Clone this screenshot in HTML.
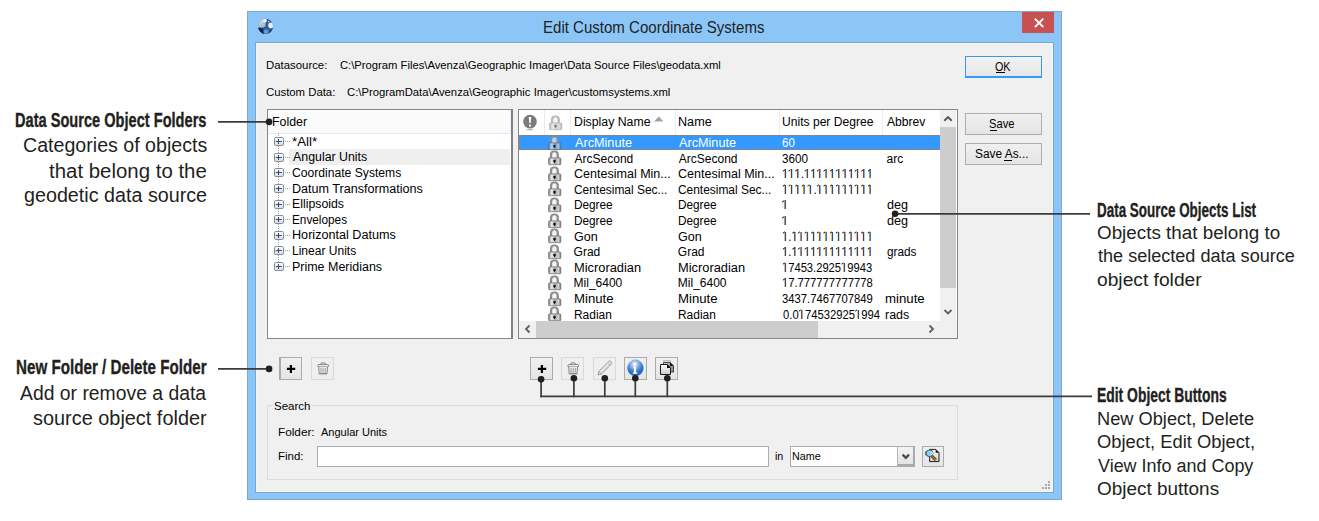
<!DOCTYPE html>
<html><head><meta charset="utf-8"><style>
html,body{margin:0;padding:0}
body{width:1319px;height:521px;background:#fff;position:relative;overflow:hidden;font-family:"Liberation Sans",sans-serif}
.a{position:absolute}
.t{position:absolute;white-space:pre;line-height:1;transform-origin:0 0;font-family:"Liberation Sans",sans-serif}
.o{position:relative;padding:0 1.9px 0 2.1px}.o::before{content:"";position:absolute;left:0.7px;top:2.6px;width:2.2px;height:1.1px;background:currentColor;transform:skewY(-38deg)}
</style></head><body>
<div class="a" style="left:247px;top:11px;width:815px;height:489px;background:#8cc6f7;box-sizing:border-box;border:1px solid #7ea6cf"></div>
<div class="a" style="left:255px;top:42px;width:799px;height:451px;background:#f0f0f0;box-sizing:border-box;border:1px solid #72a9dc"></div>
<div class="a" style="left:256px;top:43px;width:797px;height:1px;background:#f8f3ee"></div>
<div class="a" style="left:256px;top:43px;width:1px;height:449px;background:#f8f3ee"></div>
<div class="a" style="left:256px;top:491px;width:797px;height:1px;background:#f8f3ee"></div>
<div class="a" style="left:1052px;top:43px;width:1px;height:449px;background:#f8f3ee"></div>
<div class="t" style="left:542.89px;top:19.38px;font-size:16.5px;color:#222;font-weight:normal;transform:scaleX(0.9112);">Edit Custom Coordinate Systems</div>
<div class="a" style="left:1022px;top:12px;width:32px;height:21px;background:#c75050"></div>
<svg class="a" style="left:1022px;top:12px" width="32" height="21"><path d="M13.6 7.4 L20.6 14.4 M20.6 7.4 L13.6 14.4" stroke="#fff" stroke-width="1.9" stroke-linecap="square"/></svg>
<svg class="a" style="left:257px;top:18px" width="17" height="17" viewBox="0 0 17 17">
<defs><linearGradient id="gl" x1="0" y1="0" x2="0.3" y2="1"><stop offset="0" stop-color="#e9eff4"/><stop offset="1" stop-color="#9fb6ca"/></linearGradient>
<clipPath id="gc"><circle cx="8.6" cy="8.35" r="7.6"/></clipPath></defs>
<g clip-path="url(#gc)">
<rect x="0" y="0" width="17" height="17" fill="#2f5b9b"/>
<path d="M0 9.6 L0 0 L9.6 0 L9.4 3.6 L8.2 6 L8.8 8 L6.4 9.6 L3.8 9.8 Z" fill="url(#gl)"/>
<ellipse cx="8" cy="2.4" rx="1.7" ry="1.5" fill="#f2f5f8"/>
<path d="M10.8 3.2 Q12 2.6 12.6 3.6 L11.6 4.6 Z" fill="#dfe8f0"/>
<ellipse cx="13.8" cy="7.4" rx="2.6" ry="2.8" fill="#e6edf4"/>
<path d="M0 9.6 L3.8 9.8 L6.2 11.2 L7.4 17 L0 17 Z" fill="#0e2360"/>
<ellipse cx="9.2" cy="13.6" rx="2.7" ry="2.1" fill="#6b9bbd"/>
<path d="M12 12 L17 10 L17 17 L11 17 Z" fill="#244d8d"/>
</g>
</svg>
<div class="t" style="left:265.67px;top:59.95px;font-size:11px;color:#000;font-weight:normal;transform:scaleX(1.0345);">Datasource:</div>
<div class="t" style="left:339.98px;top:59.95px;font-size:11px;color:#000;font-weight:normal;transform:scaleX(1.0216);">C:\Program Files\Avenza\Geographic Imager\Data Source Files\geodata.xml</div>
<div class="t" style="left:265.67px;top:86.65px;font-size:11px;color:#000;font-weight:normal;transform:scaleX(1.0303);">Custom Data:</div>
<div class="t" style="left:346.97px;top:86.65px;font-size:11px;color:#000;font-weight:normal;transform:scaleX(1.0255);">C:\ProgramData\Avenza\Geographic Imager\customsystems.xml</div>
<div class="a" style="left:965px;top:56px;width:77px;height:22px;box-sizing:border-box;border:1px solid #3399ff;background:linear-gradient(#f2f2f2,#e6e6e6)"></div>
<div class="a" style="left:965px;top:76px;width:77px;height:2px;background:#3399ff"></div>
<div class="a" style="left:966px;top:57px;width:75px;height:1px;background:#fbf3ea"></div>
<div class="t" style="left:994.80px;top:60.70px;font-size:12px;color:#000;font-weight:normal;transform:scaleX(0.8941);">OK</div>
<div class="a" style="left:996px;top:72px;width:9px;height:1px;background:#000"></div>
<div class="a" style="left:965px;top:113px;width:77px;height:22px;box-sizing:border-box;border:1px solid #adadad;background:linear-gradient(#f0f0f0,#e5e5e5)"></div>
<div class="t" style="left:989.27px;top:117.90px;font-size:12px;color:#000;font-weight:normal;transform:scaleX(0.9308);">Save</div>
<div class="a" style="left:990px;top:130px;width:7px;height:1px;background:#000"></div>
<div class="a" style="left:965px;top:143px;width:77px;height:22px;box-sizing:border-box;border:1px solid #adadad;background:linear-gradient(#f0f0f0,#e5e5e5)"></div>
<div class="t" style="left:975.01px;top:148.40px;font-size:12px;color:#000;font-weight:normal;transform:scaleX(0.9904);">Save As...</div>
<div class="a" style="left:1004px;top:160px;width:8px;height:1px;background:#000"></div>
<div class="a" style="left:267px;top:109px;width:246px;height:230px;box-sizing:border-box;border:1px solid #828790;border-right:2px solid #7c818a;background:#fff"></div>
<div class="a" style="left:268px;top:110px;width:243px;height:23px;background:#fbfbfb"></div>
<div class="a" style="left:268px;top:133px;width:243px;height:1px;background:#e3ecf6"></div>
<div class="a" style="left:510px;top:110px;width:1px;height:24px;background:#e8eff8"></div>
<div class="t" style="left:271.97px;top:115.80px;font-size:12px;color:#000;font-weight:normal;transform:scaleX(1.0303);">Folder</div>
<div class="a" style="left:289px;top:149px;width:221px;height:16px;background:#efefef"></div>
<div class="t" style="left:291.50px;top:135.70px;font-size:12px;color:#000;font-weight:normal;transform:scaleX(1.1048);">*All*</div>
<svg class="a" style="left:274px;top:137px" width="10" height="9"><rect x="0.5" y="0.5" width="9" height="8" rx="1.3" fill="url(#pb)" stroke="#8c8c8c"/><path d="M1.7 4.5 H7.9 M4.5 1.9 V7.1" stroke="#2d4f8f" stroke-width="1.1"/></svg>
<div class="a" style="left:285px;top:141px;width:5px;height:1px;background:repeating-linear-gradient(90deg,#a0a0a0 0 1px,transparent 1px 2px)"></div>
<div class="a" style="left:278px;top:146px;width:1px;height:7px;background:repeating-linear-gradient(180deg,#a0a0a0 0 1px,transparent 1px 2px)"></div>
<div class="t" style="left:292.60px;top:151.30px;font-size:12px;color:#000;font-weight:normal;transform:scaleX(1.0306);">Angular Units</div>
<svg class="a" style="left:274px;top:153px" width="10" height="9"><rect x="0.5" y="0.5" width="9" height="8" rx="1.3" fill="url(#pb)" stroke="#8c8c8c"/><path d="M1.7 4.5 H7.9 M4.5 1.9 V7.1" stroke="#2d4f8f" stroke-width="1.1"/></svg>
<div class="a" style="left:285px;top:157px;width:5px;height:1px;background:repeating-linear-gradient(90deg,#a0a0a0 0 1px,transparent 1px 2px)"></div>
<div class="a" style="left:278px;top:162px;width:1px;height:6px;background:repeating-linear-gradient(180deg,#a0a0a0 0 1px,transparent 1px 2px)"></div>
<div class="t" style="left:291.59px;top:166.90px;font-size:12px;color:#000;font-weight:normal;transform:scaleX(1.0112);">Coordinate Systems</div>
<svg class="a" style="left:274px;top:168px" width="10" height="9"><rect x="0.5" y="0.5" width="9" height="8" rx="1.3" fill="url(#pb)" stroke="#8c8c8c"/><path d="M1.7 4.5 H7.9 M4.5 1.9 V7.1" stroke="#2d4f8f" stroke-width="1.1"/></svg>
<div class="a" style="left:285px;top:172px;width:5px;height:1px;background:repeating-linear-gradient(90deg,#a0a0a0 0 1px,transparent 1px 2px)"></div>
<div class="a" style="left:278px;top:177px;width:1px;height:7px;background:repeating-linear-gradient(180deg,#a0a0a0 0 1px,transparent 1px 2px)"></div>
<div class="t" style="left:291.55px;top:182.50px;font-size:12px;color:#000;font-weight:normal;transform:scaleX(1.0488);">Datum Transformations</div>
<svg class="a" style="left:274px;top:184px" width="10" height="9"><rect x="0.5" y="0.5" width="9" height="8" rx="1.3" fill="url(#pb)" stroke="#8c8c8c"/><path d="M1.7 4.5 H7.9 M4.5 1.9 V7.1" stroke="#2d4f8f" stroke-width="1.1"/></svg>
<div class="a" style="left:285px;top:188px;width:5px;height:1px;background:repeating-linear-gradient(90deg,#a0a0a0 0 1px,transparent 1px 2px)"></div>
<div class="a" style="left:278px;top:193px;width:1px;height:7px;background:repeating-linear-gradient(180deg,#a0a0a0 0 1px,transparent 1px 2px)"></div>
<div class="t" style="left:291.57px;top:198.10px;font-size:12px;color:#000;font-weight:normal;transform:scaleX(1.0265);">Ellipsoids</div>
<svg class="a" style="left:274px;top:200px" width="10" height="9"><rect x="0.5" y="0.5" width="9" height="8" rx="1.3" fill="url(#pb)" stroke="#8c8c8c"/><path d="M1.7 4.5 H7.9 M4.5 1.9 V7.1" stroke="#2d4f8f" stroke-width="1.1"/></svg>
<div class="a" style="left:285px;top:204px;width:5px;height:1px;background:repeating-linear-gradient(90deg,#a0a0a0 0 1px,transparent 1px 2px)"></div>
<div class="a" style="left:278px;top:209px;width:1px;height:6px;background:repeating-linear-gradient(180deg,#a0a0a0 0 1px,transparent 1px 2px)"></div>
<div class="t" style="left:291.62px;top:213.70px;font-size:12px;color:#000;font-weight:normal;transform:scaleX(0.9818);">Envelopes</div>
<svg class="a" style="left:274px;top:215px" width="10" height="9"><rect x="0.5" y="0.5" width="9" height="8" rx="1.3" fill="url(#pb)" stroke="#8c8c8c"/><path d="M1.7 4.5 H7.9 M4.5 1.9 V7.1" stroke="#2d4f8f" stroke-width="1.1"/></svg>
<div class="a" style="left:285px;top:219px;width:5px;height:1px;background:repeating-linear-gradient(90deg,#a0a0a0 0 1px,transparent 1px 2px)"></div>
<div class="a" style="left:278px;top:224px;width:1px;height:7px;background:repeating-linear-gradient(180deg,#a0a0a0 0 1px,transparent 1px 2px)"></div>
<div class="t" style="left:291.55px;top:229.30px;font-size:12px;color:#000;font-weight:normal;transform:scaleX(1.0526);">Horizontal Datums</div>
<svg class="a" style="left:274px;top:231px" width="10" height="9"><rect x="0.5" y="0.5" width="9" height="8" rx="1.3" fill="url(#pb)" stroke="#8c8c8c"/><path d="M1.7 4.5 H7.9 M4.5 1.9 V7.1" stroke="#2d4f8f" stroke-width="1.1"/></svg>
<div class="a" style="left:285px;top:235px;width:5px;height:1px;background:repeating-linear-gradient(90deg,#a0a0a0 0 1px,transparent 1px 2px)"></div>
<div class="a" style="left:278px;top:240px;width:1px;height:6px;background:repeating-linear-gradient(180deg,#a0a0a0 0 1px,transparent 1px 2px)"></div>
<div class="t" style="left:291.60px;top:244.90px;font-size:12px;color:#000;font-weight:normal;transform:scaleX(1.0032);">Linear Units</div>
<svg class="a" style="left:274px;top:246px" width="10" height="9"><rect x="0.5" y="0.5" width="9" height="8" rx="1.3" fill="url(#pb)" stroke="#8c8c8c"/><path d="M1.7 4.5 H7.9 M4.5 1.9 V7.1" stroke="#2d4f8f" stroke-width="1.1"/></svg>
<div class="a" style="left:285px;top:250px;width:5px;height:1px;background:repeating-linear-gradient(90deg,#a0a0a0 0 1px,transparent 1px 2px)"></div>
<div class="a" style="left:278px;top:255px;width:1px;height:7px;background:repeating-linear-gradient(180deg,#a0a0a0 0 1px,transparent 1px 2px)"></div>
<div class="t" style="left:291.56px;top:260.50px;font-size:12px;color:#000;font-weight:normal;transform:scaleX(1.0388);">Prime Meridians</div>
<svg class="a" style="left:274px;top:262px" width="10" height="9"><rect x="0.5" y="0.5" width="9" height="8" rx="1.3" fill="url(#pb)" stroke="#8c8c8c"/><path d="M1.7 4.5 H7.9 M4.5 1.9 V7.1" stroke="#2d4f8f" stroke-width="1.1"/></svg>
<div class="a" style="left:285px;top:266px;width:5px;height:1px;background:repeating-linear-gradient(90deg,#a0a0a0 0 1px,transparent 1px 2px)"></div>
<svg width="0" height="0" style="position:absolute"><defs><linearGradient id="pb" x1="0" y1="0" x2="0" y2="1"><stop offset="0" stop-color="#fff"/><stop offset="1" stop-color="#dcdcdc"/></linearGradient></defs></svg>
<div class="a" style="left:278px;top:133px;width:1px;height:4px;background:repeating-linear-gradient(180deg,#a0a0a0 0 1px,transparent 1px 2px)"></div>
<div class="a" style="left:518px;top:109px;width:440px;height:230px;box-sizing:border-box;border:1px solid #828790;background:#fff"></div>
<div class="a" style="left:544px;top:110px;width:1px;height:25px;background:#e5edf7"></div>
<div class="a" style="left:570px;top:110px;width:1px;height:25px;background:#e5edf7"></div>
<div class="a" style="left:675px;top:110px;width:1px;height:25px;background:#e5edf7"></div>
<div class="a" style="left:779px;top:110px;width:1px;height:25px;background:#e5edf7"></div>
<div class="a" style="left:882px;top:110px;width:1px;height:25px;background:#e5edf7"></div>
<svg class="a" style="left:522px;top:113px" width="17" height="19" viewBox="0 0 17 19">
<ellipse cx="8" cy="16.6" rx="3.6" ry="0.9" fill="#bdbdbd"/>
<circle cx="8" cy="8.6" r="6.8" fill="#7b7b7b"/>
<path d="M6.7 4 H9.3 L8.6 10.2 H7.4 Z" fill="#fff"/><rect x="7" y="11.6" width="2" height="2" rx="0.6" fill="#fff"/>
</svg>
<svg class="a" style="left:549px;top:114.5px" width="14" height="16" viewBox="0 0 14 16">
<defs><linearGradient id="lkheader" x1="0" y1="0" x2="1" y2="0"><stop offset="0" stop-color="#b9b9b9"/><stop offset="0.25" stop-color="#e8e8e8"/><stop offset="0.55" stop-color="#cdcdcd"/><stop offset="0.8" stop-color="#dedede"/><stop offset="1" stop-color="#b3b3b3"/></linearGradient></defs>
<path d="M1.9 8.5 V5 Q1.9 0.6 6.4 0.6 Q10.9 0.6 10.9 5 V8.5 Z" fill="#b8b8b8"/>
<path d="M4.2 8.5 V4.4 Q4.2 2.3 6.4 2.3 Q8.6 2.3 8.6 4.4 V8.5 Z" fill="#f6f6f6"/>
<rect x="0.6" y="7.9" width="12.2" height="6.8" rx="0.9" fill="url(#lkheader)" stroke="#b0b0b0" stroke-width="0.7"/>
<circle cx="6.5" cy="10.9" r="1.25" fill="#7a7a7a"/><path d="M5.7 11.2 L7.3 11.2 L6.8 13 H6.2 Z" fill="#7a7a7a"/>
</svg>
<div class="t" style="left:574.38px;top:115.90px;font-size:12px;color:#000;font-weight:normal;transform:scaleX(1.0247);">Display Name</div>
<svg class="a" style="left:654px;top:116px" width="10" height="6"><path d="M0 5.5 L4.75 0.5 L9.5 5.5 Z" fill="#a3a3a3"/></svg>
<div class="t" style="left:678.35px;top:115.90px;font-size:12px;color:#000;font-weight:normal;transform:scaleX(1.0516);">Name</div>
<div class="t" style="left:782.49px;top:115.90px;font-size:12px;color:#000;font-weight:normal;transform:scaleX(1.0079);">Units per Degree</div>
<div class="t" style="left:887.40px;top:115.90px;font-size:12px;color:#000;font-weight:normal;transform:scaleX(1.0105);">Abbrev</div>
<div class="a" style="left:519px;top:135px;width:421px;height:186px;overflow:hidden">
<div class="a" style="left:0px;top:0px;width:421px;height:15px;background:#3399ff"></div>
<div class="a" style="left:0;top:0;width:600px;height:15px;box-sizing:border-box;border:1px dotted #d86d1c"></div>
<svg class="a" style="left:29px;top:0px" width="14" height="16" viewBox="0 0 14 16">
<defs><linearGradient id="lksel" x1="0" y1="0" x2="1" y2="0"><stop offset="0" stop-color="#5d7fa6"/><stop offset="0.25" stop-color="#b8d2ee"/><stop offset="0.55" stop-color="#7c9cc2"/><stop offset="0.8" stop-color="#a6c2e2"/><stop offset="1" stop-color="#58789e"/></linearGradient></defs>
<path d="M1.9 8.5 V5 Q1.9 0.6 6.4 0.6 Q10.9 0.6 10.9 5 V8.5 Z" fill="#7391b5"/>
<path d="M4.2 8.5 V4.4 Q4.2 2.3 6.4 2.3 Q8.6 2.3 8.6 4.4 V8.5 Z" fill="#b9d0ea"/>
<rect x="0.6" y="7.9" width="12.2" height="6.8" rx="0.9" fill="url(#lksel)" stroke="#4f6d92" stroke-width="0.7"/>
<circle cx="6.5" cy="10.9" r="1.25" fill="#0f2440"/><path d="M5.7 11.2 L7.3 11.2 L6.8 13 H6.2 Z" fill="#0f2440"/>
</svg>
<div class="t" style="left:55.60px;top:2.00px;font-size:12px;color:#fff;font-weight:normal;transform:scaleX(1.0556);">ArcMinute</div>
<div class="t" style="left:159.80px;top:2.00px;font-size:12px;color:#fff;font-weight:normal;transform:scaleX(1.0556);">ArcMinute</div>
<div class="t" style="left:262.74px;top:2.00px;font-size:12px;color:#fff;font-weight:normal;transform:scaleX(0.9583);">60</div>
<svg class="a" style="left:29px;top:15px" width="14" height="16" viewBox="0 0 14 16">
<defs><linearGradient id="lknormal" x1="0" y1="0" x2="1" y2="0"><stop offset="0" stop-color="#7e7e7e"/><stop offset="0.25" stop-color="#ececec"/><stop offset="0.55" stop-color="#a9a9a9"/><stop offset="0.8" stop-color="#d6d6d6"/><stop offset="1" stop-color="#6f6f6f"/></linearGradient></defs>
<path d="M1.9 8.5 V5 Q1.9 0.6 6.4 0.6 Q10.9 0.6 10.9 5 V8.5 Z" fill="#8c8c8c"/>
<path d="M4.2 8.5 V4.4 Q4.2 2.3 6.4 2.3 Q8.6 2.3 8.6 4.4 V8.5 Z" fill="#f4f4f4"/>
<rect x="0.6" y="7.9" width="12.2" height="6.8" rx="0.9" fill="url(#lknormal)" stroke="#6a6a6a" stroke-width="0.7"/>
<circle cx="6.5" cy="10.9" r="1.25" fill="#0a0a0a"/><path d="M5.7 11.2 L7.3 11.2 L6.8 13 H6.2 Z" fill="#0a0a0a"/>
</svg>
<div class="t" style="left:55.60px;top:17.60px;font-size:12px;color:#000;font-weight:normal;transform:scaleX(1.0000);">ArcSecond</div>
<div class="t" style="left:159.80px;top:17.60px;font-size:12px;color:#000;font-weight:normal;transform:scaleX(1.0000);">ArcSecond</div>
<div class="t" style="left:262.72px;top:17.60px;font-size:12px;color:#000;font-weight:normal;transform:scaleX(0.9760);">3600</div>
<div class="t" style="left:367.50px;top:17.60px;font-size:12px;color:#000;font-weight:normal;transform:scaleX(1.0000);">arc</div>
<svg class="a" style="left:29px;top:31px" width="14" height="16" viewBox="0 0 14 16">
<defs><linearGradient id="lknormal" x1="0" y1="0" x2="1" y2="0"><stop offset="0" stop-color="#7e7e7e"/><stop offset="0.25" stop-color="#ececec"/><stop offset="0.55" stop-color="#a9a9a9"/><stop offset="0.8" stop-color="#d6d6d6"/><stop offset="1" stop-color="#6f6f6f"/></linearGradient></defs>
<path d="M1.9 8.5 V5 Q1.9 0.6 6.4 0.6 Q10.9 0.6 10.9 5 V8.5 Z" fill="#8c8c8c"/>
<path d="M4.2 8.5 V4.4 Q4.2 2.3 6.4 2.3 Q8.6 2.3 8.6 4.4 V8.5 Z" fill="#f4f4f4"/>
<rect x="0.6" y="7.9" width="12.2" height="6.8" rx="0.9" fill="url(#lknormal)" stroke="#6a6a6a" stroke-width="0.7"/>
<circle cx="6.5" cy="10.9" r="1.25" fill="#0a0a0a"/><path d="M5.7 11.2 L7.3 11.2 L6.8 13 H6.2 Z" fill="#0a0a0a"/>
</svg>
<div class="t" style="left:54.56px;top:33.20px;font-size:12px;color:#000;font-weight:normal;transform:scaleX(1.0440);">Centesimal Min...</div>
<div class="t" style="left:158.76px;top:33.20px;font-size:12px;color:#000;font-weight:normal;transform:scaleX(1.0440);">Centesimal Min...</div>
<div class="t" style="left:262.76px;top:33.20px;font-size:12px;color:#000;font-weight:normal;transform:scaleX(0.9441);"><span class="o">l</span><span class="o">l</span><span class="o">l</span>.<span class="o">l</span><span class="o">l</span><span class="o">l</span><span class="o">l</span><span class="o">l</span><span class="o">l</span><span class="o">l</span><span class="o">l</span><span class="o">l</span><span class="o">l</span><span class="o">l</span></div>
<svg class="a" style="left:29px;top:46px" width="14" height="16" viewBox="0 0 14 16">
<defs><linearGradient id="lknormal" x1="0" y1="0" x2="1" y2="0"><stop offset="0" stop-color="#7e7e7e"/><stop offset="0.25" stop-color="#ececec"/><stop offset="0.55" stop-color="#a9a9a9"/><stop offset="0.8" stop-color="#d6d6d6"/><stop offset="1" stop-color="#6f6f6f"/></linearGradient></defs>
<path d="M1.9 8.5 V5 Q1.9 0.6 6.4 0.6 Q10.9 0.6 10.9 5 V8.5 Z" fill="#8c8c8c"/>
<path d="M4.2 8.5 V4.4 Q4.2 2.3 6.4 2.3 Q8.6 2.3 8.6 4.4 V8.5 Z" fill="#f4f4f4"/>
<rect x="0.6" y="7.9" width="12.2" height="6.8" rx="0.9" fill="url(#lknormal)" stroke="#6a6a6a" stroke-width="0.7"/>
<circle cx="6.5" cy="10.9" r="1.25" fill="#0a0a0a"/><path d="M5.7 11.2 L7.3 11.2 L6.8 13 H6.2 Z" fill="#0a0a0a"/>
</svg>
<div class="t" style="left:54.61px;top:48.80px;font-size:12px;color:#000;font-weight:normal;transform:scaleX(0.9935);">Centesimal Sec...</div>
<div class="t" style="left:158.81px;top:48.80px;font-size:12px;color:#000;font-weight:normal;transform:scaleX(0.9935);">Centesimal Sec...</div>
<div class="t" style="left:262.76px;top:48.80px;font-size:12px;color:#000;font-weight:normal;transform:scaleX(0.9441);"><span class="o">l</span><span class="o">l</span><span class="o">l</span><span class="o">l</span><span class="o">l</span>.<span class="o">l</span><span class="o">l</span><span class="o">l</span><span class="o">l</span><span class="o">l</span><span class="o">l</span><span class="o">l</span><span class="o">l</span><span class="o">l</span></div>
<svg class="a" style="left:29px;top:62px" width="14" height="16" viewBox="0 0 14 16">
<defs><linearGradient id="lknormal" x1="0" y1="0" x2="1" y2="0"><stop offset="0" stop-color="#7e7e7e"/><stop offset="0.25" stop-color="#ececec"/><stop offset="0.55" stop-color="#a9a9a9"/><stop offset="0.8" stop-color="#d6d6d6"/><stop offset="1" stop-color="#6f6f6f"/></linearGradient></defs>
<path d="M1.9 8.5 V5 Q1.9 0.6 6.4 0.6 Q10.9 0.6 10.9 5 V8.5 Z" fill="#8c8c8c"/>
<path d="M4.2 8.5 V4.4 Q4.2 2.3 6.4 2.3 Q8.6 2.3 8.6 4.4 V8.5 Z" fill="#f4f4f4"/>
<rect x="0.6" y="7.9" width="12.2" height="6.8" rx="0.9" fill="url(#lknormal)" stroke="#6a6a6a" stroke-width="0.7"/>
<circle cx="6.5" cy="10.9" r="1.25" fill="#0a0a0a"/><path d="M5.7 11.2 L7.3 11.2 L6.8 13 H6.2 Z" fill="#0a0a0a"/>
</svg>
<div class="t" style="left:54.62px;top:64.40px;font-size:12px;color:#000;font-weight:normal;transform:scaleX(0.9816);">Degree</div>
<div class="t" style="left:158.82px;top:64.40px;font-size:12px;color:#000;font-weight:normal;transform:scaleX(0.9816);">Degree</div>
<div class="t" style="left:262.70px;top:64.40px;font-size:12px;color:#000;font-weight:normal;"><span class="o">l</span></div>
<div class="t" style="left:367.50px;top:64.40px;font-size:12px;color:#000;font-weight:normal;transform:scaleX(1.0526);">deg</div>
<svg class="a" style="left:29px;top:78px" width="14" height="16" viewBox="0 0 14 16">
<defs><linearGradient id="lknormal" x1="0" y1="0" x2="1" y2="0"><stop offset="0" stop-color="#7e7e7e"/><stop offset="0.25" stop-color="#ececec"/><stop offset="0.55" stop-color="#a9a9a9"/><stop offset="0.8" stop-color="#d6d6d6"/><stop offset="1" stop-color="#6f6f6f"/></linearGradient></defs>
<path d="M1.9 8.5 V5 Q1.9 0.6 6.4 0.6 Q10.9 0.6 10.9 5 V8.5 Z" fill="#8c8c8c"/>
<path d="M4.2 8.5 V4.4 Q4.2 2.3 6.4 2.3 Q8.6 2.3 8.6 4.4 V8.5 Z" fill="#f4f4f4"/>
<rect x="0.6" y="7.9" width="12.2" height="6.8" rx="0.9" fill="url(#lknormal)" stroke="#6a6a6a" stroke-width="0.7"/>
<circle cx="6.5" cy="10.9" r="1.25" fill="#0a0a0a"/><path d="M5.7 11.2 L7.3 11.2 L6.8 13 H6.2 Z" fill="#0a0a0a"/>
</svg>
<div class="t" style="left:54.62px;top:80.00px;font-size:12px;color:#000;font-weight:normal;transform:scaleX(0.9816);">Degree</div>
<div class="t" style="left:158.82px;top:80.00px;font-size:12px;color:#000;font-weight:normal;transform:scaleX(0.9816);">Degree</div>
<div class="t" style="left:262.70px;top:80.00px;font-size:12px;color:#000;font-weight:normal;"><span class="o">l</span></div>
<div class="t" style="left:367.50px;top:80.00px;font-size:12px;color:#000;font-weight:normal;transform:scaleX(1.0526);">deg</div>
<svg class="a" style="left:29px;top:93px" width="14" height="16" viewBox="0 0 14 16">
<defs><linearGradient id="lknormal" x1="0" y1="0" x2="1" y2="0"><stop offset="0" stop-color="#7e7e7e"/><stop offset="0.25" stop-color="#ececec"/><stop offset="0.55" stop-color="#a9a9a9"/><stop offset="0.8" stop-color="#d6d6d6"/><stop offset="1" stop-color="#6f6f6f"/></linearGradient></defs>
<path d="M1.9 8.5 V5 Q1.9 0.6 6.4 0.6 Q10.9 0.6 10.9 5 V8.5 Z" fill="#8c8c8c"/>
<path d="M4.2 8.5 V4.4 Q4.2 2.3 6.4 2.3 Q8.6 2.3 8.6 4.4 V8.5 Z" fill="#f4f4f4"/>
<rect x="0.6" y="7.9" width="12.2" height="6.8" rx="0.9" fill="url(#lknormal)" stroke="#6a6a6a" stroke-width="0.7"/>
<circle cx="6.5" cy="10.9" r="1.25" fill="#0a0a0a"/><path d="M5.7 11.2 L7.3 11.2 L6.8 13 H6.2 Z" fill="#0a0a0a"/>
</svg>
<div class="t" style="left:54.55px;top:95.60px;font-size:12px;color:#000;font-weight:normal;transform:scaleX(1.0476);">Gon</div>
<div class="t" style="left:158.75px;top:95.60px;font-size:12px;color:#000;font-weight:normal;transform:scaleX(1.0476);">Gon</div>
<div class="t" style="left:262.76px;top:95.60px;font-size:12px;color:#000;font-weight:normal;transform:scaleX(0.9419);"><span class="o">l</span>.<span class="o">l</span><span class="o">l</span><span class="o">l</span><span class="o">l</span><span class="o">l</span><span class="o">l</span><span class="o">l</span><span class="o">l</span><span class="o">l</span><span class="o">l</span><span class="o">l</span><span class="o">l</span><span class="o">l</span></div>
<svg class="a" style="left:29px;top:109px" width="14" height="16" viewBox="0 0 14 16">
<defs><linearGradient id="lknormal" x1="0" y1="0" x2="1" y2="0"><stop offset="0" stop-color="#7e7e7e"/><stop offset="0.25" stop-color="#ececec"/><stop offset="0.55" stop-color="#a9a9a9"/><stop offset="0.8" stop-color="#d6d6d6"/><stop offset="1" stop-color="#6f6f6f"/></linearGradient></defs>
<path d="M1.9 8.5 V5 Q1.9 0.6 6.4 0.6 Q10.9 0.6 10.9 5 V8.5 Z" fill="#8c8c8c"/>
<path d="M4.2 8.5 V4.4 Q4.2 2.3 6.4 2.3 Q8.6 2.3 8.6 4.4 V8.5 Z" fill="#f4f4f4"/>
<rect x="0.6" y="7.9" width="12.2" height="6.8" rx="0.9" fill="url(#lknormal)" stroke="#6a6a6a" stroke-width="0.7"/>
<circle cx="6.5" cy="10.9" r="1.25" fill="#0a0a0a"/><path d="M5.7 11.2 L7.3 11.2 L6.8 13 H6.2 Z" fill="#0a0a0a"/>
</svg>
<div class="t" style="left:54.60px;top:111.20px;font-size:12px;color:#000;font-weight:normal;transform:scaleX(1.0000);">Grad</div>
<div class="t" style="left:158.80px;top:111.20px;font-size:12px;color:#000;font-weight:normal;transform:scaleX(1.0000);">Grad</div>
<div class="t" style="left:262.76px;top:111.20px;font-size:12px;color:#000;font-weight:normal;transform:scaleX(0.9419);"><span class="o">l</span>.<span class="o">l</span><span class="o">l</span><span class="o">l</span><span class="o">l</span><span class="o">l</span><span class="o">l</span><span class="o">l</span><span class="o">l</span><span class="o">l</span><span class="o">l</span><span class="o">l</span><span class="o">l</span><span class="o">l</span></div>
<div class="t" style="left:367.50px;top:111.20px;font-size:12px;color:#000;font-weight:normal;transform:scaleX(0.9833);">grads</div>
<svg class="a" style="left:29px;top:124px" width="14" height="16" viewBox="0 0 14 16">
<defs><linearGradient id="lknormal" x1="0" y1="0" x2="1" y2="0"><stop offset="0" stop-color="#7e7e7e"/><stop offset="0.25" stop-color="#ececec"/><stop offset="0.55" stop-color="#a9a9a9"/><stop offset="0.8" stop-color="#d6d6d6"/><stop offset="1" stop-color="#6f6f6f"/></linearGradient></defs>
<path d="M1.9 8.5 V5 Q1.9 0.6 6.4 0.6 Q10.9 0.6 10.9 5 V8.5 Z" fill="#8c8c8c"/>
<path d="M4.2 8.5 V4.4 Q4.2 2.3 6.4 2.3 Q8.6 2.3 8.6 4.4 V8.5 Z" fill="#f4f4f4"/>
<rect x="0.6" y="7.9" width="12.2" height="6.8" rx="0.9" fill="url(#lknormal)" stroke="#6a6a6a" stroke-width="0.7"/>
<circle cx="6.5" cy="10.9" r="1.25" fill="#0a0a0a"/><path d="M5.7 11.2 L7.3 11.2 L6.8 13 H6.2 Z" fill="#0a0a0a"/>
</svg>
<div class="t" style="left:54.53px;top:126.80px;font-size:12px;color:#000;font-weight:normal;transform:scaleX(1.0705);">Microradian</div>
<div class="t" style="left:158.73px;top:126.80px;font-size:12px;color:#000;font-weight:normal;transform:scaleX(1.0705);">Microradian</div>
<div class="t" style="left:262.77px;top:126.80px;font-size:12px;color:#000;font-weight:normal;transform:scaleX(0.9316);"><span class="o">l</span>7453.2925<span class="o">l</span>9943</div>
<svg class="a" style="left:29px;top:140px" width="14" height="16" viewBox="0 0 14 16">
<defs><linearGradient id="lknormal" x1="0" y1="0" x2="1" y2="0"><stop offset="0" stop-color="#7e7e7e"/><stop offset="0.25" stop-color="#ececec"/><stop offset="0.55" stop-color="#a9a9a9"/><stop offset="0.8" stop-color="#d6d6d6"/><stop offset="1" stop-color="#6f6f6f"/></linearGradient></defs>
<path d="M1.9 8.5 V5 Q1.9 0.6 6.4 0.6 Q10.9 0.6 10.9 5 V8.5 Z" fill="#8c8c8c"/>
<path d="M4.2 8.5 V4.4 Q4.2 2.3 6.4 2.3 Q8.6 2.3 8.6 4.4 V8.5 Z" fill="#f4f4f4"/>
<rect x="0.6" y="7.9" width="12.2" height="6.8" rx="0.9" fill="url(#lknormal)" stroke="#6a6a6a" stroke-width="0.7"/>
<circle cx="6.5" cy="10.9" r="1.25" fill="#0a0a0a"/><path d="M5.7 11.2 L7.3 11.2 L6.8 13 H6.2 Z" fill="#0a0a0a"/>
</svg>
<div class="t" style="left:54.60px;top:142.40px;font-size:12px;color:#000;font-weight:normal;transform:scaleX(1.0000);">Mil_6400</div>
<div class="t" style="left:158.80px;top:142.40px;font-size:12px;color:#000;font-weight:normal;transform:scaleX(1.0000);">Mil_6400</div>
<div class="t" style="left:262.76px;top:142.40px;font-size:12px;color:#000;font-weight:normal;transform:scaleX(0.9368);"><span class="o">l</span>7.777777777778</div>
<svg class="a" style="left:29px;top:156px" width="14" height="16" viewBox="0 0 14 16">
<defs><linearGradient id="lknormal" x1="0" y1="0" x2="1" y2="0"><stop offset="0" stop-color="#7e7e7e"/><stop offset="0.25" stop-color="#ececec"/><stop offset="0.55" stop-color="#a9a9a9"/><stop offset="0.8" stop-color="#d6d6d6"/><stop offset="1" stop-color="#6f6f6f"/></linearGradient></defs>
<path d="M1.9 8.5 V5 Q1.9 0.6 6.4 0.6 Q10.9 0.6 10.9 5 V8.5 Z" fill="#8c8c8c"/>
<path d="M4.2 8.5 V4.4 Q4.2 2.3 6.4 2.3 Q8.6 2.3 8.6 4.4 V8.5 Z" fill="#f4f4f4"/>
<rect x="0.6" y="7.9" width="12.2" height="6.8" rx="0.9" fill="url(#lknormal)" stroke="#6a6a6a" stroke-width="0.7"/>
<circle cx="6.5" cy="10.9" r="1.25" fill="#0a0a0a"/><path d="M5.7 11.2 L7.3 11.2 L6.8 13 H6.2 Z" fill="#0a0a0a"/>
</svg>
<div class="t" style="left:54.50px;top:158.00px;font-size:12px;color:#000;font-weight:normal;transform:scaleX(1.0971);">Minute</div>
<div class="t" style="left:158.70px;top:158.00px;font-size:12px;color:#000;font-weight:normal;transform:scaleX(1.0971);">Minute</div>
<div class="t" style="left:262.76px;top:158.00px;font-size:12px;color:#000;font-weight:normal;transform:scaleX(0.9368);">3437.7467707849</div>
<div class="t" style="left:366.40px;top:158.00px;font-size:12px;color:#000;font-weight:normal;transform:scaleX(1.1029);">minute</div>
<svg class="a" style="left:29px;top:171px" width="14" height="16" viewBox="0 0 14 16">
<defs><linearGradient id="lknormal" x1="0" y1="0" x2="1" y2="0"><stop offset="0" stop-color="#7e7e7e"/><stop offset="0.25" stop-color="#ececec"/><stop offset="0.55" stop-color="#a9a9a9"/><stop offset="0.8" stop-color="#d6d6d6"/><stop offset="1" stop-color="#6f6f6f"/></linearGradient></defs>
<path d="M1.9 8.5 V5 Q1.9 0.6 6.4 0.6 Q10.9 0.6 10.9 5 V8.5 Z" fill="#8c8c8c"/>
<path d="M4.2 8.5 V4.4 Q4.2 2.3 6.4 2.3 Q8.6 2.3 8.6 4.4 V8.5 Z" fill="#f4f4f4"/>
<rect x="0.6" y="7.9" width="12.2" height="6.8" rx="0.9" fill="url(#lknormal)" stroke="#6a6a6a" stroke-width="0.7"/>
<circle cx="6.5" cy="10.9" r="1.25" fill="#0a0a0a"/><path d="M5.7 11.2 L7.3 11.2 L6.8 13 H6.2 Z" fill="#0a0a0a"/>
</svg>
<div class="t" style="left:54.61px;top:173.60px;font-size:12px;color:#000;font-weight:normal;transform:scaleX(0.9944);">Radian</div>
<div class="t" style="left:158.81px;top:173.60px;font-size:12px;color:#000;font-weight:normal;transform:scaleX(0.9944);">Radian</div>
<div class="t" style="left:263.70px;top:173.60px;font-size:12px;color:#000;font-weight:normal;transform:scaleX(0.9379);">0.0<span class="o">l</span>74532925<span class="o">l</span>994</div>
<div class="t" style="left:366.46px;top:173.60px;font-size:12px;color:#000;font-weight:normal;transform:scaleX(1.0364);">rads</div>
</div>
<div class="a" style="left:940px;top:110px;width:16px;height:211px;background:#f0f0f0"></div>
<div class="a" style="left:940px;top:127px;width:16px;height:161px;background:#cdcdcd"></div>
<svg class="a" style="left:940px;top:110px" width="16" height="17"><path d="M4.3 10.8 L8 7.1 L11.7 10.8" fill="none" stroke="#5a5a5a" stroke-width="2"/></svg>
<svg class="a" style="left:940px;top:304px" width="16" height="17"><path d="M4.5 6 L8 9.5 L11.5 6" fill="none" stroke="#606060" stroke-width="1.8"/></svg>
<div class="a" style="left:519px;top:321px;width:438px;height:17px;background:#f0f0f0"></div>
<div class="a" style="left:536px;top:321px;width:282px;height:17px;background:#cdcdcd"></div>
<svg class="a" style="left:519px;top:321px" width="17" height="17"><path d="M10.5 4.5 L7 8 L10.5 11.5" fill="none" stroke="#606060" stroke-width="1.8"/></svg>
<svg class="a" style="left:923px;top:321px" width="17" height="17"><path d="M6.5 4.5 L10 8 L6.5 11.5" fill="none" stroke="#606060" stroke-width="1.8"/></svg>
<div class="a" style="left:279px;top:357px;width:23px;height:23px;box-sizing:border-box;border:1px solid #acacac;background:linear-gradient(#f0f0f0,#e5e5e5)"></div>
<div class="a" style="left:279px;top:357px;width:2px;height:23px;background:#a9a9a9"></div>
<svg class="a" style="left:279px;top:357px" width="23" height="23"><path d="M7.9 11.9 H16.2 M11.9 7.9 V15.9" stroke="#000" stroke-width="2.2"/></svg>
<div class="a" style="left:311px;top:357px;width:23px;height:23px;box-sizing:border-box;border:1px solid #d9d9d9;background:#efefef"></div>
<svg class="a" style="left:311px;top:357px" width="23" height="23"><ellipse cx="12.1" cy="17.4" rx="4.8" ry="0.8" fill="#d2d2d2"/>
<path d="M9.9 7.7 V6.6 Q9.9 5.9 10.6 5.9 H13.6 Q14.3 5.9 14.3 6.6 V7.7" fill="#fff" stroke="#7c7c7c" stroke-width="1"/>
<rect x="6.8" y="7.6" width="10.8" height="2.3" rx="1.1" fill="#fbfbfb" stroke="#7c7c7c" stroke-width="1"/>
<path d="M7.8 9.9 L8.2 16.6 H16 L16.4 9.9" fill="#fff" stroke="#7c7c7c" stroke-width="1"/>
<path d="M10 10.6 V15.9 M12.1 10.6 V15.9 M14.2 10.6 V15.9" stroke="#8c8c8c" stroke-width="1"/></svg>
<div class="a" style="left:530px;top:357px;width:23px;height:23px;box-sizing:border-box;border:1px solid #acacac;background:linear-gradient(#f0f0f0,#e5e5e5)"></div>
<svg class="a" style="left:530px;top:357px" width="23" height="23"><path d="M7.9 11.9 H16.2 M11.9 7.9 V15.9" stroke="#000" stroke-width="2.2"/></svg>
<div class="a" style="left:561px;top:357px;width:23px;height:23px;box-sizing:border-box;border:1px solid #d9d9d9;background:#efefef"></div>
<svg class="a" style="left:561px;top:357px" width="23" height="23"><ellipse cx="12.1" cy="17.4" rx="4.8" ry="0.8" fill="#d2d2d2"/>
<path d="M9.9 7.7 V6.6 Q9.9 5.9 10.6 5.9 H13.6 Q14.3 5.9 14.3 6.6 V7.7" fill="#fff" stroke="#7c7c7c" stroke-width="1"/>
<rect x="6.8" y="7.6" width="10.8" height="2.3" rx="1.1" fill="#fbfbfb" stroke="#7c7c7c" stroke-width="1"/>
<path d="M7.8 9.9 L8.2 16.6 H16 L16.4 9.9" fill="#fff" stroke="#7c7c7c" stroke-width="1"/>
<path d="M10 10.6 V15.9 M12.1 10.6 V15.9 M14.2 10.6 V15.9" stroke="#8c8c8c" stroke-width="1"/></svg>
<div class="a" style="left:593px;top:357px;width:23px;height:23px;box-sizing:border-box;border:1px solid #d9d9d9;background:#efefef"></div>
<svg class="a" style="left:593px;top:357px" width="23" height="23">
<g transform="translate(11.9 11) rotate(-45.6)">
<rect x="-7" y="-1.9" width="15.8" height="3.8" rx="1.3" fill="#dadada" stroke="#a2a2a2" stroke-width="0.9"/>
<path d="M-7 -1.9 L-9.7 0 L-7 1.9 Z" fill="#e4e4e4" stroke="#a2a2a2" stroke-width="0.8"/>
<path d="M-9.7 0 L-8.6 -0.8 L-8.6 0.8 Z" fill="#6f6f6f"/>
<path d="M-6 -0.6 H7" stroke="#f2f2f2" stroke-width="0.9"/>
<path d="M5.6 -1.9 V1.9" stroke="#b4b4b4" stroke-width="0.8"/>
</g>
</svg>
<div class="a" style="left:624px;top:357px;width:23px;height:23px;box-sizing:border-box;border:1px solid #acacac;background:linear-gradient(#f0f0f0,#e5e5e5)"></div>
<svg class="a" style="left:624px;top:357px" width="23" height="23">
<defs><radialGradient id="ig" cx="0.45" cy="0.25" r="0.8"><stop offset="0" stop-color="#eef4fb"/><stop offset="0.35" stop-color="#7fa9e0"/><stop offset="0.65" stop-color="#2f72cf"/><stop offset="1" stop-color="#1a58b4"/></radialGradient></defs>
<rect x="8.6" y="2.8" width="5.6" height="1.6" rx="0.8" fill="#5b86c6"/>
<circle cx="11.4" cy="10.9" r="8.1" fill="url(#ig)"/>
<circle cx="10.9" cy="7.3" r="1.3" fill="#fff"/>
<path d="M9.2 9.2 H12.1 V15.6 H13.4 V16.8 H8.8 V15.6 H9.9 V10.4 H9.2 Z" fill="#fff"/>
</svg>
<div class="a" style="left:655px;top:357px;width:23px;height:23px;box-sizing:border-box;border:1px solid #acacac;background:linear-gradient(#f0f0f0,#e5e5e5)"></div>
<svg class="a" style="left:655px;top:357px" width="23" height="23">
<defs><linearGradient id="cf" x1="0" y1="0" x2="0" y2="1"><stop offset="0" stop-color="#fbfbfb"/><stop offset="1" stop-color="#c9c9c9"/></linearGradient>
<linearGradient id="cb" x1="0" y1="0" x2="1" y2="0"><stop offset="0" stop-color="#d0d0d0"/><stop offset="1" stop-color="#8a8a8a"/></linearGradient></defs>
<rect x="8" y="3.1" width="8" height="1.4" fill="#b9b9b9"/>
<path d="M8.5 5.5 H15.2 L18.5 8.8 V15 H8.5 Z" fill="url(#cb)" stroke="#333" stroke-width="0.9"/>
<path d="M15 5.5 L18.5 9 H15 Z" fill="#111"/>
<path d="M5.5 7.5 H12.3 L15.5 10.7 V17.5 H5.5 Z" fill="url(#cf)" stroke="#1a1a1a" stroke-width="1"/>
<path d="M12 7.5 L15.5 11 H12 Z" fill="#0a0a0a"/>
</svg>
<div class="a" style="left:267px;top:405px;width:691px;height:75px;box-sizing:border-box;border:1px solid #dcdcdc"></div>
<div class="a" style="left:273px;top:398px;width:39px;height:14px;background:#f0f0f0"></div>
<div class="t" style="left:274.35px;top:400.55px;font-size:11px;color:#000;font-weight:normal;transform:scaleX(1.0455);">Search</div>
<div class="t" style="left:277.63px;top:426.55px;font-size:11px;color:#000;font-weight:normal;transform:scaleX(1.0697);">Folder:</div>
<div class="t" style="left:321.00px;top:426.55px;font-size:11px;color:#000;font-weight:normal;transform:scaleX(1.0000);">Angular Units</div>
<div class="t" style="left:277.66px;top:450.95px;font-size:11px;color:#000;font-weight:normal;transform:scaleX(1.0435);">Find:</div>
<div class="a" style="left:317px;top:446px;width:452px;height:21px;box-sizing:border-box;border:1px solid #abadb3;background:#fff"></div>
<div class="t" style="left:774.93px;top:450.95px;font-size:11px;color:#000;font-weight:normal;transform:scaleX(0.9714);">in</div>
<div class="a" style="left:790px;top:446px;width:125px;height:21px;box-sizing:border-box;border:1px solid #acacac;background:#fff"></div>
<div class="a" style="left:897px;top:447px;width:17px;height:19px;box-sizing:border-box;border-left:1px solid #b4b4b4;border-right:1px solid #a9a9a9;border-bottom:2px solid #a9a9a9;background:linear-gradient(#f3f3f3,#e3e3e3)"></div>
<svg class="a" style="left:897px;top:447px" width="17" height="19"><path d="M5.6 7.6 L8.8 10.8 L12 7.6" fill="none" stroke="#4d4d4d" stroke-width="2.3"/></svg>
<div class="t" style="left:791.62px;top:450.95px;font-size:11px;color:#000;font-weight:normal;transform:scaleX(0.9750);">Name</div>
<div class="a" style="left:922px;top:446px;width:22px;height:21px;box-sizing:border-box;border:1px solid #acacac;background:linear-gradient(#f0f0f0,#e5e5e5)"></div>
<svg class="a" style="left:922px;top:446px" width="22" height="21">
<defs><linearGradient id="sd" x1="0" y1="0" x2="0" y2="1"><stop offset="0" stop-color="#fafafa"/><stop offset="1" stop-color="#cfcfcf"/></linearGradient></defs>
<path d="M7.6 3.4 H13.8 L17 6.6 V15.6 H7.6 Z" fill="url(#sd)" stroke="#1e1e1e" stroke-width="1"/>
<path d="M13.6 3.4 L17 6.8 H13.6 Z" fill="#111"/>
<path d="M9.6 9.8 L13.8 14" stroke="#3a2a0a" stroke-width="2.8"/>
<path d="M9.6 9.8 L13.8 14" stroke="#b8860b" stroke-width="1.4"/>
<ellipse cx="4.2" cy="7.4" rx="1.4" ry="2.4" fill="#4b8fb8"/>
<circle cx="7.6" cy="7.3" r="3.4" fill="#8ad4f6" stroke="#4a4a4a" stroke-width="0.9"/>
<path d="M9.2 5 A2.6 2.6 0 0 1 9.6 9" fill="none" stroke="#e8f7fd" stroke-width="1"/>
</svg>
<div class="a" style="left:1048px;top:481px;width:2px;height:2px;background:#a8a8a8"></div>
<div class="a" style="left:1045px;top:484px;width:2px;height:2px;background:#a8a8a8"></div>
<div class="a" style="left:1048px;top:484px;width:2px;height:2px;background:#a8a8a8"></div>
<div class="a" style="left:1042px;top:487px;width:2px;height:2px;background:#a8a8a8"></div>
<div class="a" style="left:1045px;top:487px;width:2px;height:2px;background:#a8a8a8"></div>
<div class="a" style="left:1048px;top:487px;width:2px;height:2px;background:#a8a8a8"></div>
<svg class="a" style="left:0;top:0" width="1319" height="521"><line x1="218" y1="121.9" x2="269" y2="121.9" stroke="#3d3b3c" stroke-width="1.7"/><circle cx="269.1" cy="121.9" r="3.3" fill="#231f20"/><line x1="218" y1="368.9" x2="269" y2="368.9" stroke="#3d3b3c" stroke-width="1.7"/><circle cx="269.1" cy="368.9" r="3.3" fill="#231f20"/><line x1="895" y1="213.9" x2="1090" y2="213.9" stroke="#3d3b3c" stroke-width="1.7"/><circle cx="895.1" cy="213.8" r="3.3" fill="#231f20"/><line x1="540.3" y1="396.4" x2="1092" y2="396.4" stroke="#3d3b3c" stroke-width="1.7"/><line x1="541.1" y1="379.3" x2="541.1" y2="397.2" stroke="#3d3b3c" stroke-width="1.7"/><circle cx="541.1" cy="379.3" r="3.3" fill="#231f20"/><line x1="573.9" y1="378.3" x2="573.9" y2="397.2" stroke="#3d3b3c" stroke-width="1.7"/><circle cx="573.9" cy="378.3" r="3.3" fill="#231f20"/><line x1="604.8" y1="378.3" x2="604.8" y2="397.2" stroke="#3d3b3c" stroke-width="1.7"/><circle cx="604.8" cy="378.3" r="3.3" fill="#231f20"/><line x1="635.3" y1="378.3" x2="635.3" y2="397.2" stroke="#3d3b3c" stroke-width="1.7"/><circle cx="635.3" cy="378.3" r="3.3" fill="#231f20"/><line x1="667.3" y1="378.3" x2="667.3" y2="397.2" stroke="#3d3b3c" stroke-width="1.7"/><circle cx="667.3" cy="378.3" r="3.3" fill="#231f20"/></svg>
<div class="t" style="left:15.47px;top:109.50px;font-size:20px;color:#231f20;font-weight:bold;transform:scaleX(0.7299);-webkit-text-stroke:0.35px #231f20;">Data Source Object Folders</div>
<div class="t" style="left:23.12px;top:134.60px;font-size:20px;color:#231f20;font-weight:normal;transform:scaleX(0.9806);">Categories of objects</div>
<div class="t" style="left:49.30px;top:160.60px;font-size:20px;color:#231f20;font-weight:normal;transform:scaleX(1.0208);">that belong to the</div>
<div class="t" style="left:24.11px;top:185.40px;font-size:20px;color:#231f20;font-weight:normal;transform:scaleX(0.9859);">geodetic data source</div>
<div class="t" style="left:16.44px;top:356.80px;font-size:20px;color:#231f20;font-weight:bold;transform:scaleX(0.7592);-webkit-text-stroke:0.35px #231f20;">New Folder / Delete Folder</div>
<div class="t" style="left:20.30px;top:382.60px;font-size:20px;color:#231f20;font-weight:normal;transform:scaleX(0.9674);">Add or remove a data</div>
<div class="t" style="left:32.91px;top:407.60px;font-size:20px;color:#231f20;font-weight:normal;transform:scaleX(0.9948);">source object folder</div>
<div class="t" style="left:1097.33px;top:199.80px;font-size:20px;color:#231f20;font-weight:bold;transform:scaleX(0.6720);-webkit-text-stroke:0.35px #231f20;">Data Source Objects List</div>
<div class="t" style="left:1097.00px;top:223.62px;font-size:18.8px;color:#231f20;font-weight:normal;transform:scaleX(1.0022);">Objects that belong to</div>
<div class="t" style="left:1098.00px;top:246.92px;font-size:18.8px;color:#231f20;font-weight:normal;transform:scaleX(0.9618);">the selected data source</div>
<div class="t" style="left:1096.98px;top:270.62px;font-size:18.8px;color:#231f20;font-weight:normal;transform:scaleX(1.0228);">object folder</div>
<div class="t" style="left:1097.31px;top:384.80px;font-size:20px;color:#231f20;font-weight:bold;transform:scaleX(0.6946);-webkit-text-stroke:0.35px #231f20;">Edit Object Buttons</div>
<div class="t" style="left:1097.03px;top:409.62px;font-size:18.8px;color:#231f20;font-weight:normal;transform:scaleX(0.9706);">New Object, Delete</div>
<div class="t" style="left:1097.02px;top:433.12px;font-size:18.8px;color:#231f20;font-weight:normal;transform:scaleX(0.9767);">Object, Edit Object,</div>
<div class="t" style="left:1098.00px;top:456.82px;font-size:18.8px;color:#231f20;font-weight:normal;transform:scaleX(0.9558);">View Info and Copy</div>
<div class="t" style="left:1096.99px;top:479.62px;font-size:18.8px;color:#231f20;font-weight:normal;transform:scaleX(1.0083);">Object buttons</div>
</body></html>
